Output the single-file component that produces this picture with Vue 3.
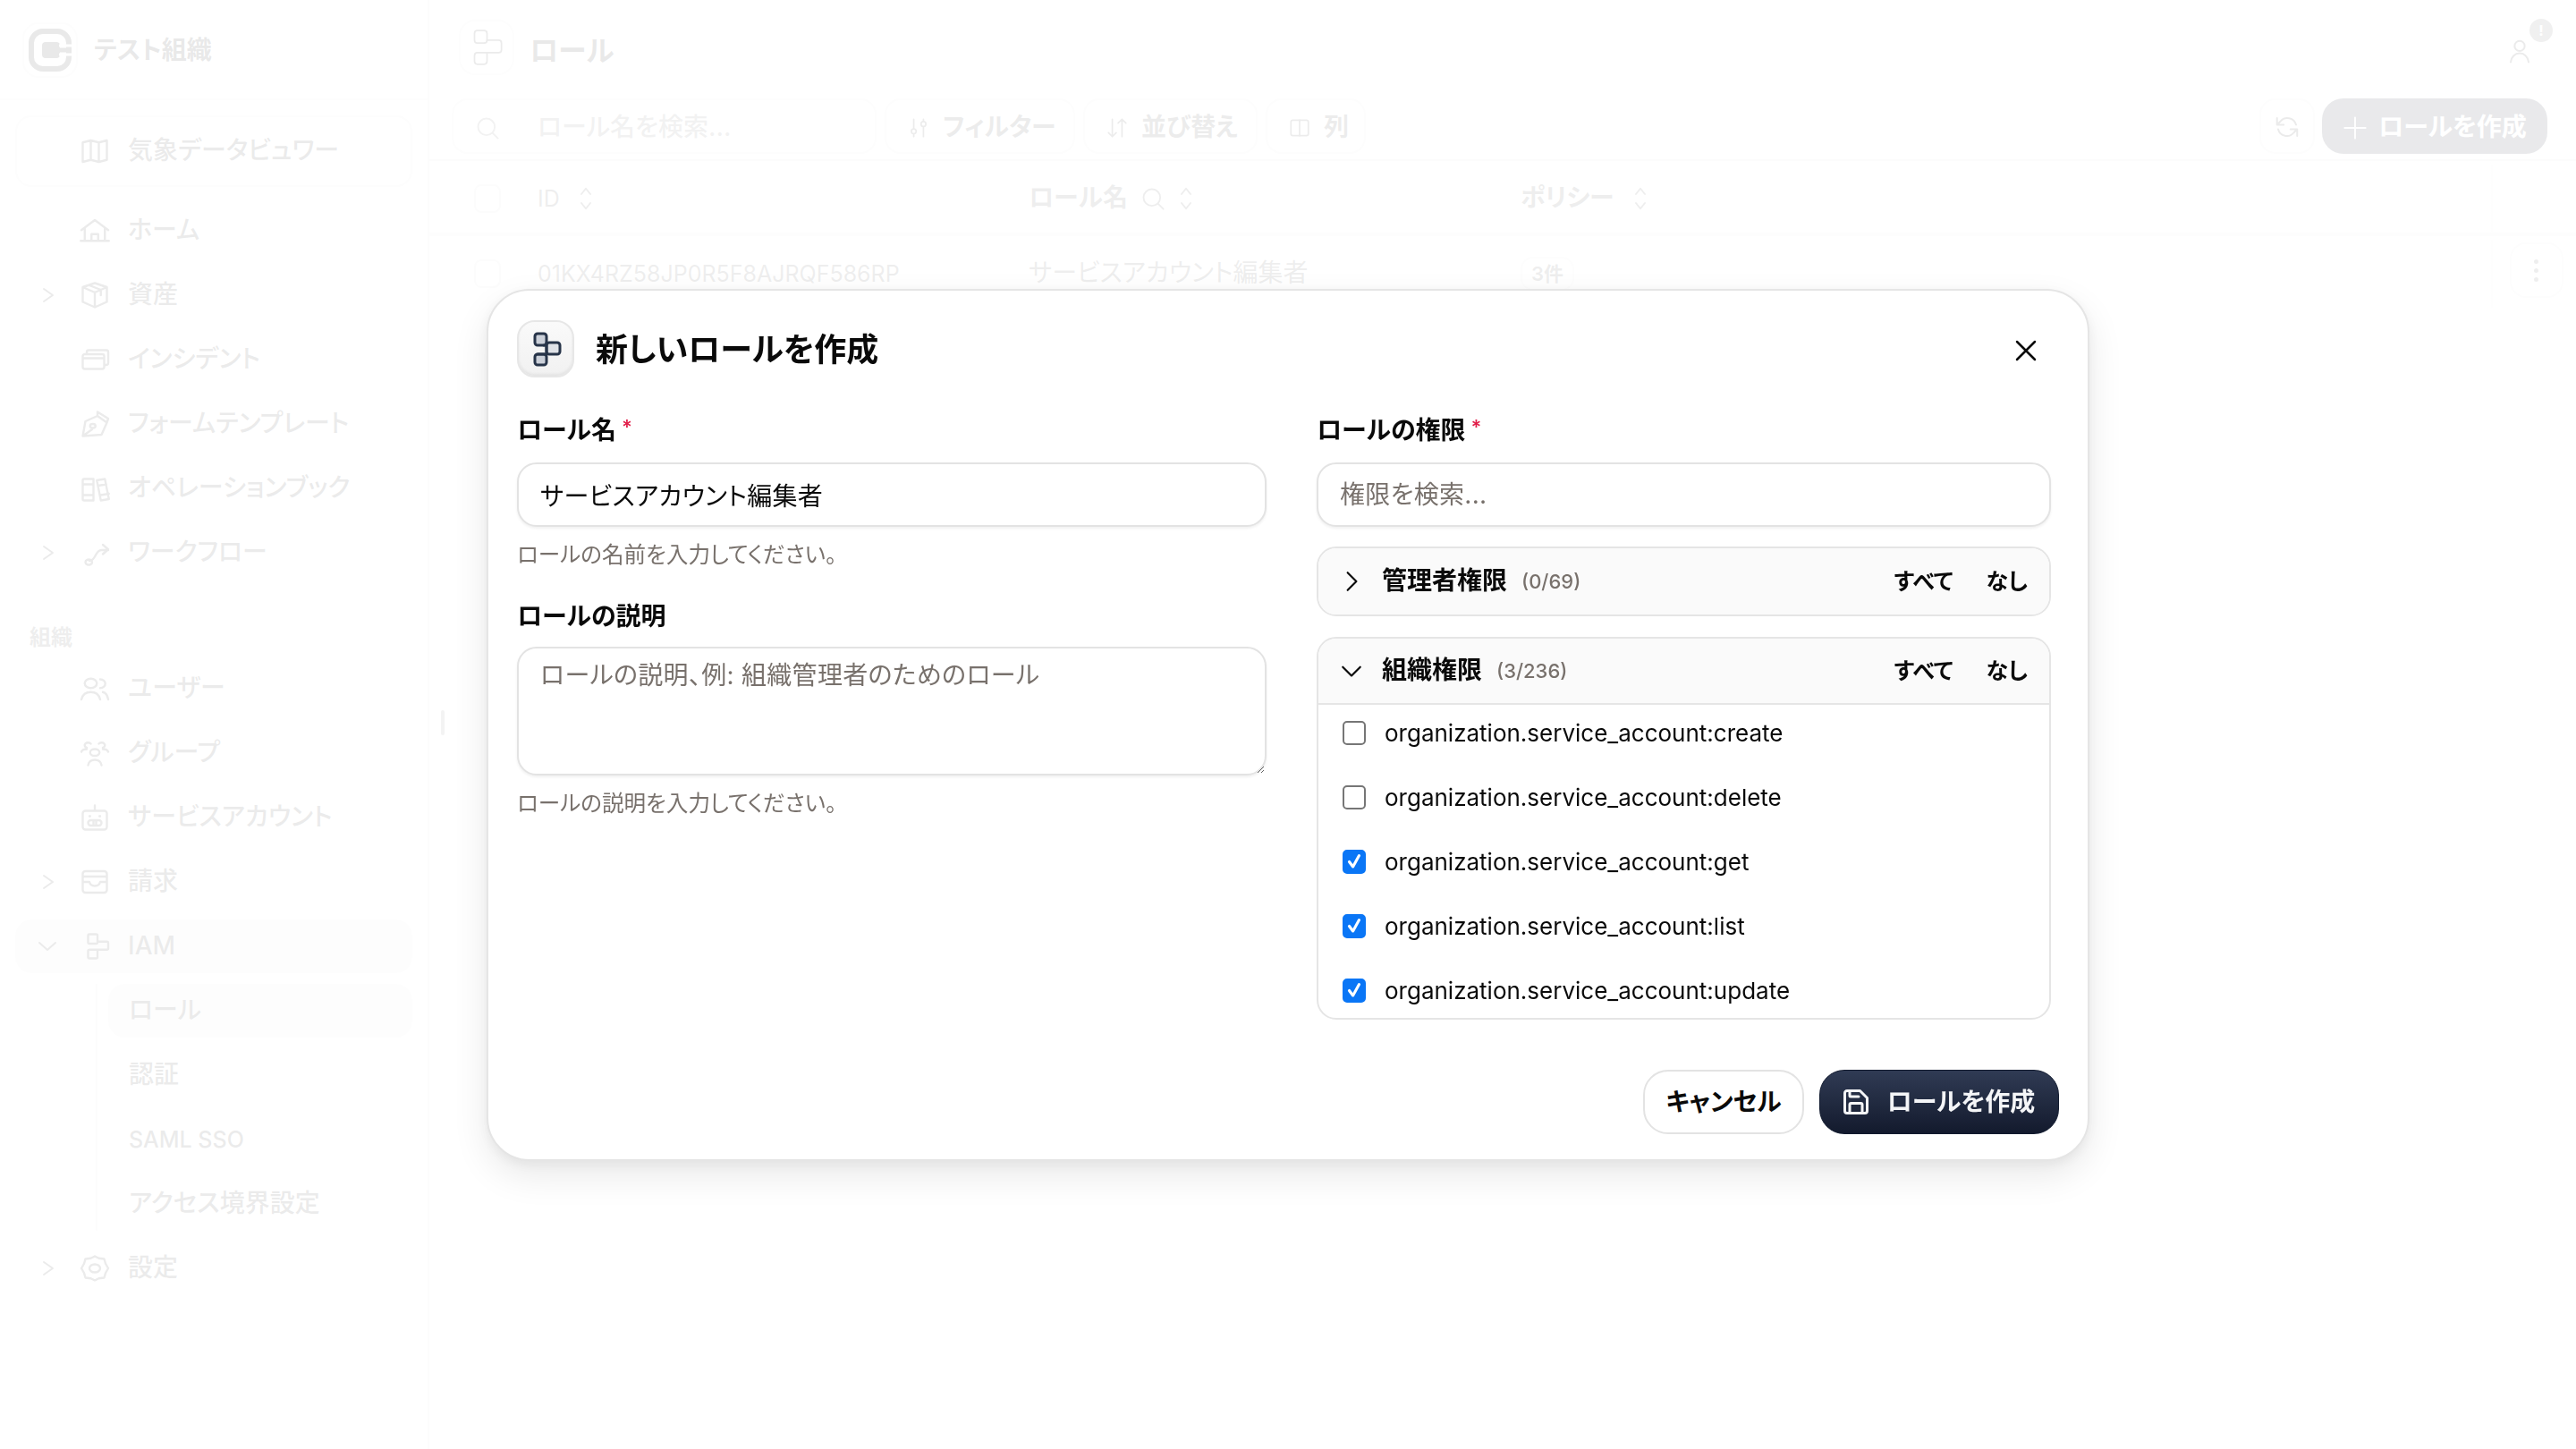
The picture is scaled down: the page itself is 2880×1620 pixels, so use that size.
<script setup>
const navTop = [
  { label: 'ホーム', icon: 'home' },
  { label: '資産', icon: 'box', chev: true },
  { label: 'インシデント', icon: 'cards' },
  { label: 'フォームテンプレート', icon: 'pen' },
  { label: 'オペレーションブック', icon: 'books' },
  { label: 'ワークフロー', icon: 'flow', chev: true },
]
const navOrg = [
  { label: 'ユーザー', icon: 'users' },
  { label: 'グループ', icon: 'group' },
  { label: 'サービスアカウント', icon: 'robot' },
  { label: '請求', icon: 'inbox', chev: true },
]
const subs = ['ロール', '認証', 'SAML SSO', 'アクセス境界設定']
const perms = [
  { name: 'organization.service_account:create', on: false },
  { name: 'organization.service_account:delete', on: false },
  { name: 'organization.service_account:get', on: true },
  { name: 'organization.service_account:list', on: true },
  { name: 'organization.service_account:update', on: true },
]
const paths = {
  map: 'M3 5.500 9 4l6 1.500L21 4v14.500L15 20l-6-1.500L3 20V5.500ZM9 4v14.500M15 5.500V20',
  home: 'M2 11.500 12 4l10 7.500M4.500 10v9.500M19.500 10v9.500M1.500 19.500h21M9.500 19.500v-5h5v5',
  box: 'M12 3l9 3v11l-9 4-9-4V6l9-3ZM3 6l9 4 9-4M12 10v11M7.500 4.500l9 3.500v4',
  cards: 'M3 9.500A1.500 1.500 0 0 1 4.500 8h13A1.500 1.500 0 0 1 19 9.500v8a1.500 1.500 0 0 1-1.500 1.500h-13A1.500 1.500 0 0 1 3 17.500v-8ZM6 8V6.500A1.500 1.500 0 0 1 7.500 5h13A1.500 1.500 0 0 1 22 6.500v8a1.500 1.500 0 0 1-1.500 1.500H19M3 11h16',
  pen: 'M3 21l2-11 9-4 7 5-4 9-14 1ZM3 21l7-5M14 3l8 5-1 3-7-5ZM12.500 13.500a2 1.500 0 1 1-4 0 2 1.500 0 1 1 4 0Z',
  books: 'M4 5h7v16H4a1 1 0 0 1-1-1V6a1 1 0 0 1 1-1ZM3 9h8M3 17h8M13.500 6l6-1 3 15-6 1-3-15ZM14.500 10l6-1M16.500 17l6-1',
  flow: 'M5 19a2.500 2 0 1 0 0-.01ZM8 18c5 0 4-8 9-8h5M18 6l4 3.500-4 3.500',
  users: 'M9 11.500a4.500 3.500 0 1 0 0-7 4.500 3.500 0 0 0 0 7ZM2 20c1-4 4-5.500 7-5.500s6 1.500 7 5.500M16 5a3.500 3 0 0 1 0 6.500M18 14.500c2 .5 3.500 2.500 4 5.500',
  group: 'M12 14a3.500 2.500 0 1 0 0-5 3.500 2.500 0 0 0 0 5ZM7 21c.5-2.500 2.500-4 5-4s4.500 1.500 5 4M6 8a2.500 2 0 1 1 3-3M18 8a2.500 2 0 1 0-3-3M2 11c.5-1.500 2-2 4-2M22 11c-.5-1.500-2-2-4-2',
  robot: 'M12 3v4M5 7h14a2 2 0 0 1 2 2v10a2 2 0 0 1-2 2H5a2 2 0 0 1-2-2V9a2 2 0 0 1 2-2ZM9 14h6a2 2 0 0 1 0 4H9a2 2 0 0 1 0-4ZM11 14v4M13 14v4M8 11h.5M15.500 11h.5',
  inbox: 'M5 4h14a2 2 0 0 1 2 2v12a2 2 0 0 1-2 2H5a2 2 0 0 1-2-2V6a2 2 0 0 1 2-2ZM3 8h18M3 12h5c.5 2 2 3 4 3s3.500-1 4-3h5',
  gear: 'M9 4.500 12 3l3 1.500 4 .5 1 3.500L22 12l-2 3.500-1 3.500-4 .5L12 21l-3-1.500-4-.5-1-3.500L2 12l2-3.500L5 5l4-.5ZM12 15a4 3 0 1 0 0-6 4 3 0 0 0 0 6Z',
}
</script>

<template>
  <div class="page">
    <aside class="side">
      <div class="org">
        <span class="logo">
          <svg class="logo-svg" viewBox="0 0 48 48" width="48" height="48">
            <rect x="3" y="3" width="42" height="42" rx="13" stroke-width="6"/>
            <rect class="logo-block" x="15" y="15" width="20" height="18" rx="4"/>
            <path class="logo-gap" d="M34 19h14M34 29h14" />
            <path d="M34 24h13" stroke-width="5" />
          </svg>
        </span>
        <span class="org-name">テスト組織</span>
      </div>
      <div class="nav">
        <div class="item boxed">
          <span class="chev"></span>
          <svg class="ic" viewBox="0 0 24 24"><path :d="paths.map"/></svg>
          <span>気象データビュワー</span>
        </div>
        <div v-for="n in navTop" :key="n.label" class="item">
          <span class="chev">
            <svg v-if="n.chev" viewBox="0 0 24 24"><path d="M8 5l10 7-10 7"/></svg>
          </span>
          <svg class="ic" viewBox="0 0 24 24"><path :d="paths[n.icon]"/></svg>
          <span>{{ n.label }}</span>
        </div>
        <div class="group-label">組織</div>
        <div v-for="n in navOrg" :key="n.label" class="item">
          <span class="chev">
            <svg v-if="n.chev" viewBox="0 0 24 24"><path d="M8 5l10 7-10 7"/></svg>
          </span>
          <svg class="ic" viewBox="0 0 24 24"><path :d="paths[n.icon]"/></svg>
          <span>{{ n.label }}</span>
        </div>
        <div class="item tint">
          <span class="chev">
            <svg viewBox="0 0 24 24"><path d="M3 8l9 8 9-8"/></svg>
          </span>
          <svg class="ic" viewBox="0 0 24 24"><path d="M8 3h5a1 1 0 0 1 1 1v5a1 1 0 0 1-1 1H8a1 1 0 0 1-1-1V4a1 1 0 0 1 1-1ZM14 8.500h7a1 1 0 0 1 1 1v4a1 1 0 0 1-1 1H8a1 1 0 0 0-1 1v4.500a1 1 0 0 0 1 1h5a1 1 0 0 0 1-1v-5"/></svg>
          <span>IAM</span>
        </div>
        <div class="subs">
          <div v-for="(s, i) in subs" :key="s" class="sub" :class="{ tint: i === 0, latin: s === 'SAML SSO' }">{{ s }}</div>
        </div>
        <div class="item">
          <span class="chev">
            <svg viewBox="0 0 24 24"><path d="M8 5l10 7-10 7"/></svg>
          </span>
          <svg class="ic" viewBox="0 0 24 24"><path :d="paths.gear"/></svg>
          <span>設定</span>
        </div>
      </div>
    </aside>

    <main class="main">
      <header class="top">
        <span class="crumb-ic">
          <svg viewBox="0 0 32 39" width="35" height="42"><rect x="3" y="2" width="13" height="13" rx="3"/><path d="M16 12h12a3 3 0 0 1 3 3v7a3 3 0 0 1-3 3H6a3 3 0 0 0-3 3v6a3 3 0 0 0 3 3h7a3 3 0 0 0 3-3v-9"/></svg>
        </span>
        <span class="crumb">ロール</span>
        <span class="avatar">
          <svg viewBox="0 0 24 24" width="30" height="30"><path d="M12 12a4.500 4.500 0 1 0 0-9 4.500 4.500 0 0 0 0 9ZM4 22c.500-5 4-8 8-8s7.500 3 8 8"/></svg>
          <b class="bang">!</b>
        </span>
      </header>
      <div class="tools">
        <div class="search">
          <svg viewBox="0 0 24 24" width="28" height="28"><circle cx="11" cy="11" r="8"/><path d="M17 17l5 5"/></svg>
          <span>ロール名を検索...</span>
        </div>
        <span class="tbtn">
          <svg viewBox="0 0 24 24" width="26" height="26"><path d="M7 3v10M7 18v3M17 3v2M17 11v10"/><circle cx="7" cy="15.500" r="2.500"/><circle cx="17" cy="8" r="2.500"/></svg>
          フィルター
        </span>
        <span class="tbtn sort">
          <svg viewBox="0 0 24 24" width="26" height="26"><path d="M7 3v18M3 17l4 4 4-4M17 21V3M13 7l4-4 4 4"/></svg>
          並び替え
        </span>
        <span class="tbtn cols">
          <svg viewBox="0 0 24 24" width="26" height="26"><rect x="3" y="4" width="18" height="16" rx="2"/><path d="M12 4v16"/></svg>
          列
        </span>
        <span class="spacer"></span>
        <span class="refresh">
          <svg viewBox="0 0 24 24" width="30" height="30"><path d="M20 10a8 8 0 0 0-14-3L3 10M3 4v6h6M4 14a8 8 0 0 0 14 3l3-3M21 20v-6h-6"/></svg>
        </span>
        <span class="cta">
          <svg viewBox="0 0 24 24" width="28" height="28"><path d="M12 2v20M2 12h20"/></svg>
          ロールを作成
        </span>
      </div>
      <div class="thead">
        <span class="check"></span>
        <span class="c-id">ID <svg class="updown" viewBox="0 0 12 24"><path d="M2 8l4-5 4 5M2 16l4 5 4-5"/></svg></span>
        <span class="c-name">ロール名
          <svg viewBox="0 0 24 24" width="28" height="28"><circle cx="11" cy="11" r="8"/><path d="M17 17l5 5"/></svg>
          <svg class="updown" viewBox="0 0 12 24"><path d="M2 8l4-5 4 5M2 16l4 5 4-5"/></svg>
        </span>
        <span class="c-pol">ポリシー <svg class="updown" viewBox="0 0 12 24"><path d="M2 8l4-5 4 5M2 16l4 5 4-5"/></svg></span>
        <span class="c-act"></span>
      </div>
      <div class="trow">
        <span class="check"></span>
        <span class="c-id">01KX4RZ58JP0R5F8AJRQF586RP</span>
        <span class="c-name">サービスアカウント編集者</span>
        <span class="c-pol"><i class="count">3件</i></span>
        <span class="c-act"><span class="dots"><i></i><i></i><i></i></span></span>
      </div>
    </main>
    <span class="resizer"></span>
  </div>

  <div class="veil">
    <section class="dialog">
      <div class="dhead">
        <span class="dicon">
          <svg viewBox="0 0 34 39" width="34" height="39">
            <rect class="f1" x="3" y="2" width="13" height="13" rx="3"/>
            <rect class="f2" x="16" y="12" width="15" height="13" rx="3"/>
            <rect class="f1" x="3" y="25" width="13" height="12" rx="3"/>
            <path d="M16 12v13M16 15h-3M16 25H6"/>
          </svg>
        </span>
        <h2>新しいロールを作成</h2>
        <svg class="close" viewBox="0 0 24 24" width="30" height="30"><path d="M4 4l16 16M20 4L4 20"/></svg>
      </div>

      <div class="cols2">
        <div class="col-l">
          <label class="lab">ロール名<em>*</em></label>
          <input class="field" value="サービスアカウント編集者" readonly>
          <p class="help">ロールの名前を入力してください。</p>
          <label class="lab lab2">ロールの説明</label>
          <textarea class="field area" placeholder="ロールの説明、例: 組織管理者のためのロール" readonly></textarea>
          <p class="help">ロールの説明を入力してください。</p>
        </div>
        <div class="col-r">
          <label class="lab">ロールの権限<em>*</em></label>
          <input class="field" placeholder="権限を検索..." readonly>
          <div class="grp g1">
            <div class="ghead">
              <svg class="gchev" viewBox="0 0 24 24" width="26" height="26"><path d="M8 3l9 9-9 9"/></svg>
              <strong>管理者権限</strong><small>(0/69)</small>
              <span class="spacer"></span>
              <a>すべて</a><a class="none">なし</a>
            </div>
          </div>
          <div class="grp">
            <div class="ghead open">
              <svg class="gchev" viewBox="0 0 24 24" width="26" height="26"><path d="M3 8l9 9 9-9"/></svg>
              <strong>組織権限</strong><small>(3/236)</small>
              <span class="spacer"></span>
              <a>すべて</a><a class="none">なし</a>
            </div>
            <div class="plist">
              <div v-for="p in perms" :key="p.name" class="perm">
                <span class="cb" :class="{ on: p.on }">
                  <svg v-if="p.on" viewBox="0 0 24 24" width="22" height="22"><path d="M6 12.500l4.500 6L18 5"/></svg>
                </span>
                {{ p.name }}
              </div>
            </div>
          </div>
        </div>
      </div>

      <div class="foot">
        <button class="cancel">キャンセル</button>
        <button class="save">
          <svg viewBox="0 0 28 28" width="28" height="28"><path d="M4 1.500h14.500l8 8V24a2.500 2.500 0 0 1-2.500 2.500H4A2.500 2.500 0 0 1 1.500 24V4A2.500 2.500 0 0 1 4 1.500ZM7 26.500V17a1.500 1.500 0 0 1 1.500-1.500h11A1.500 1.500 0 0 1 21 17v9.500M7 1.500V7a1 1 0 0 0 1 1h9"/></svg>
          ロールを作成
        </button>
      </div>
    </section>
  </div>
</template>

<style>
body { margin: 0; background: #fff; }
</style>

<style scoped>
* { box-sizing: border-box; }
svg { fill: none; stroke: currentColor; stroke-width: 1.6; stroke-linecap: round; stroke-linejoin: round; flex: none; display: block; }
.page {
  position: relative;
  display: flex;
  width: 2880px;
  height: 1620px;
  overflow: hidden;
  font: 500 28px/1.2 Inter, "Noto Sans CJK JP", sans-serif;
  font-feature-settings: "palt";
  color: #333;
}
.side { width: 480px; border-right: 2px solid #dcdcdc; flex: none; }
.org { height: 112px; border-bottom: 2px solid #e4e4e4; display: flex; align-items: center; gap: 18px; padding: 2px 25px 0; }
.logo { width: 62px; height: 62px; border: 2px solid #e8e8e8; border-radius: 18px; display: flex; align-items: center; justify-content: center; color: #222; }
.logo-block { fill: currentColor; stroke: none; }
.logo-gap { stroke: #fff; stroke-width: 3; stroke-linecap: butt; }
.org-name { font-size: 28px; font-weight: 700; color: #222; transform: translateY(1px); }
.nav { padding: 17px 17px 0; }
.item { height: 60px; margin-bottom: 12px; display: flex; align-items: center; border-radius: 18px; }
.boxed { height: 80px; border: 2px solid #e4e4e4; margin-bottom: 19px; }
.chev { width: 71px; display: flex; justify-content: center; }
.chev svg { width: 24px; height: 24px; stroke-width: 2; }
.ic { width: 36px; height: 36px; margin-right: 19px; }
.boxed .chev { width: 69px; }
.tint { background: #ebebeb; }
.group-label { font-size: 24px; color: #555; margin: 51px 0 13px 16px; height: 28px; font-weight: 600; }
.subs { margin: 0 0 4px 90px; border-left: 2px solid #e0e0e0; padding-left: 12px; }
.sub { height: 60px; margin-bottom: 12px; padding-left: 23px; border-radius: 18px; display: flex; align-items: center; }
.sub.latin { font-size: 25px; }
.main { flex: 1; min-width: 0; }
.top { height: 106px; display: flex; align-items: center; padding: 0 36px 0 33px; position: relative; }
.crumb-ic { width: 62px; height: 62px; border: 2px solid #e8e8e8; border-radius: 18px; display: flex; align-items: center; justify-content: center; }
.crumb { font-size: 32px; font-weight: 700; margin-left: 17px; color: #222; transform: translateY(4px); }
.avatar { margin-left: auto; position: relative; width: 60px; height: 60px; display: flex; align-items: center; justify-content: center; transform: translate(3px, 4px); }
.bang { position: absolute; right: -7px; top: -6px; width: 26px; height: 26px; border-radius: 50%; background: #666; color: #fff; font-size: 16px; text-align: center; line-height: 26px; }
.tools { height: 74px; padding: 4px 32px 6px 25px; display: flex; align-items: stretch; gap: 9px; border-bottom: 2px solid #dcdcdc; }
.search { width: 475px; border: 2px solid #e6e6e6; border-radius: 18px; display: flex; align-items: center; padding: 4px 0 0 24px; gap: 42px; color: #777; }
.tbtn { display: flex; align-items: center; gap: 14px; padding: 4px 23px 0; border: 2px solid #e6e6e6; border-radius: 18px; font-weight: 600; color: #444; width: 213px; white-space: nowrap; }
.sort { width: 195px; }
.cols { width: 112px; }
.spacer { flex: 1; }
.refresh { width: 62px; border: 2px solid #e6e6e6; border-radius: 18px; display: flex; align-items: center; justify-content: center; margin-right: -1px; padding-top: 2px; }
.cta { width: 252px; background: #1e2638; color: #fff; border-radius: 24px; display: flex; align-items: center; justify-content: center; gap: 12px; font-weight: 600; padding-top: 3px; }
.thead, .trow { display: flex; align-items: center; height: 84px; border-bottom: 4px solid #ececec; padding: 4px 0 0 50px; color: #555; }
.trow { height: 80px; border-bottom: 0; font-weight: 400; }
.check { width: 30px; height: 32px; border: 2px solid #ddd; border-radius: 8px; margin-right: 41px; flex: none; }
.c-id { width: 549px; display: flex; align-items: center; gap: 20px; font-weight: 400; flex: none; font-size: 25px; }
.thead .c-name, .thead .c-pol { font-weight: 600; }
.c-name { width: 550px; display: flex; align-items: center; gap: 14px; flex: none; }
.c-pol { width: 1085px; display: flex; align-items: center; gap: 20px; flex: none; }
.c-act { flex: 1; height: 100%; border-left: 2px solid #eee; display: flex; align-items: center; justify-content: center; padding-left: 4px; }
.updown { width: 18px; height: 30px; }
.count { font-style: normal; font-size: 22px; font-weight: 600; border: 2px solid #e6e6e6; border-radius: 14px; padding: 4px 10px; }
.dots { width: 60px; height: 62px; border: 2px solid #e8e8e8; border-radius: 18px; display: flex; flex-direction: column; align-items: center; justify-content: center; gap: 5px; transform: translateY(-4px); }
.dots i { width: 5px; height: 5px; background: #555; border-radius: 50%; }
.resizer { position: absolute; left: 493px; top: 794px; width: 4px; height: 28px; background: #888; border-radius: 2px; }

.veil {
  position: fixed;
  inset: 0;
  width: 2880px;
  height: 1620px;
  background: rgba(255, 255, 255, .9);
  font: 400 28px/1.2 Inter, "Noto Sans CJK JP", sans-serif;
  font-feature-settings: "palt";
  color: #0a0a0a;
}
.dialog {
  position: absolute;
  left: 544px;
  top: 323px;
  width: 1792px;
  height: 975px;
  padding: 32px;
  background: #fff;
  border: 2px solid #e5e5e5;
  border-radius: 48px;
  box-shadow: 0 16px 40px rgba(0, 0, 0, .09), 0 4px 12px rgba(0, 0, 0, .05);
}
.dhead { display: flex; align-items: center; height: 64px; }
.dicon { width: 64px; height: 64px; border-radius: 20px; border: 2px solid #e7e7e7; background: linear-gradient(#fafafa, #f1f1f1); box-shadow: inset 0 -2px 3px rgba(0,0,0,.06); display: flex; align-items: center; justify-content: center; padding-left: 3px; color: #273449; transform: translateY(1px); }
.dicon svg { stroke-width: 3; }
.f1 { fill: #cbd0d9; }
.f2 { fill: #dfe2e7; }
.dhead h2 { margin: 0 0 0 24px; font-size: 36px; font-weight: 700; transform: translateY(3px); }
.close { margin-left: auto; margin-right: 22px; color: #0a0a0a; stroke-width: 2; transform: translateY(3px); }
.cols2 { display: grid; grid-template-columns: 838px 821px; column-gap: 56px; margin-top: 40px; }
.lab { display: block; font-size: 28px; font-weight: 700; height: 40px; line-height: 32px; }
.lab em { color: #e11d48; font-style: normal; font-size: 22px; margin-left: 6px; vertical-align: 6px; font-weight: 600; }
.field {
  display: block;
  width: 100%;
  height: 72px;
  margin-top: 16px;
  padding: 0 24px;
  border: 2px solid #e3e3e3;
  border-radius: 22px;
  background: #fff;
  box-shadow: 0 2px 3px rgba(0, 0, 0, .06);
  font: 400 28px/40px Inter, "Noto Sans CJK JP", sans-serif;
  font-feature-settings: "palt";
  letter-spacing: .3px;
  color: #0a0a0a;
  outline: none;
}
.field::placeholder { color: #78716c; opacity: 1; }
.area { height: 144px; padding: 10px 24px; resize: vertical; }
.help { margin: 14px 0 0; height: 34px; line-height: 34px; font-size: 24.6px; color: #78716c; }
.lab2 { margin-top: 32px; height: 38px; line-height: 40px; }
.grp { margin-top: 23px; border: 2px solid #e5e5e5; border-radius: 22px; overflow: hidden; }
.g1 { margin-top: 22px; }
.ghead { display: flex; align-items: center; height: 74px; background: #fafafa; padding: 0 24px 0 24px; font-size: 25px; }
.ghead.open { border-bottom: 2px solid #e5e5e5; }
.gchev { margin-right: 21px; stroke-width: 2; }
.ghead strong { font-weight: 700; font-size: 28px; }
.ghead small { font-size: 22px; color: #78716c; margin-left: 16px; font-weight: 500; }
.ghead a { font-weight: 600; }
.none { margin-left: 37px; }
.plist { margin-bottom: -6px; }
.perm { height: 72px; display: flex; align-items: center; gap: 21px; padding-left: 27px; font-size: 26px; }
.perm:first-child { margin-top: -4px; }
.cb { width: 26px; height: 27px; border: 2px solid #767676; border-radius: 5px; background: #fff; display: flex; align-items: center; justify-content: center; transform: translateY(-1px); }
.cb.on { background: #0a76f6; border-color: #0a76f6; color: #fff; }
.cb svg { stroke-width: 3.4; }
.foot { position: absolute; right: 32px; bottom: 28px; display: flex; gap: 17px; }
.foot button { height: 72px; border-radius: 28px; font: 700 28px/1 Inter, "Noto Sans CJK JP", sans-serif; font-feature-settings: "palt"; display: flex; align-items: center; justify-content: center; }
.cancel { width: 180px; background: #fff; border: 2px solid #e3e3e3; color: #0a0a0a; }
.save { width: 268px; border: 1px solid #111a2e; gap: 21px; color: #f4f5f7; background: linear-gradient(#303b54, #131a2d); }
.save svg { stroke-width: 3; }
</style>
